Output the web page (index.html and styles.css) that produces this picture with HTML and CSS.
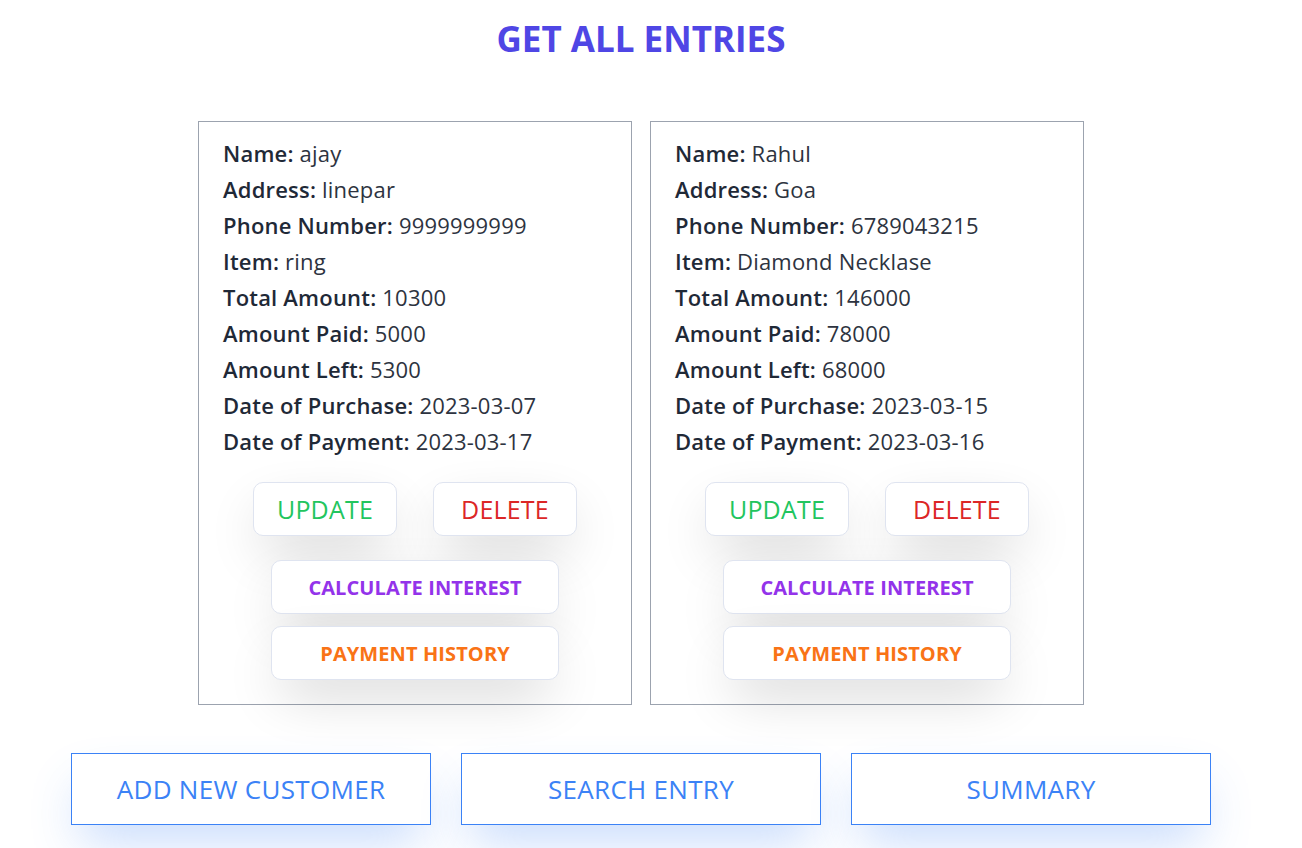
FILE: index.html
```html
<!DOCTYPE html>
<html lang="en">
<head>
<meta charset="utf-8">
<title>Get All Entries</title>
<link rel="stylesheet" href="styles.css">
</head>
<body>
<div class="page">
  <h1 class="title">GET ALL ENTRIES</h1>
  <div class="cards">
    <div class="card">
      <div class="fields">
        <p><b>Name:</b> ajay</p>
        <p><b>Address:</b> linepar</p>
        <p><b>Phone Number:</b> 9999999999</p>
        <p><b>Item:</b> ring</p>
        <p><b>Total Amount:</b> 10300</p>
        <p><b>Amount Paid:</b> 5000</p>
        <p><b>Amount Left:</b> 5300</p>
        <p><b>Date of Purchase:</b> 2023-03-07</p>
        <p><b>Date of Payment:</b> 2023-03-17</p>
      </div>
      <div class="row">
        <button class="btn btn-update">UPDATE</button>
        <button class="btn btn-delete">DELETE</button>
      </div>
      <button class="btn btn-wide btn-interest">CALCULATE INTEREST</button>
      <button class="btn btn-wide btn-history">PAYMENT HISTORY</button>
    </div>
    <div class="card">
      <div class="fields">
        <p><b>Name:</b> Rahul</p>
        <p><b>Address:</b> Goa</p>
        <p><b>Phone Number:</b> 6789043215</p>
        <p><b>Item:</b> Diamond Necklase</p>
        <p><b>Total Amount:</b> 146000</p>
        <p><b>Amount Paid:</b> 78000</p>
        <p><b>Amount Left:</b> 68000</p>
        <p><b>Date of Purchase:</b> 2023-03-15</p>
        <p><b>Date of Payment:</b> 2023-03-16</p>
      </div>
      <div class="row">
        <button class="btn btn-update">UPDATE</button>
        <button class="btn btn-delete">DELETE</button>
      </div>
      <button class="btn btn-wide btn-interest">CALCULATE INTEREST</button>
      <button class="btn btn-wide btn-history">PAYMENT HISTORY</button>
    </div>
  </div>
  <div class="actions">
    <button class="action">ADD NEW CUSTOMER</button>
    <button class="action">SEARCH ENTRY</button>
    <button class="action">SUMMARY</button>
  </div>
</div>
</body>
</html>
```

FILE: styles.css
```css
* { box-sizing: border-box; }
html { overflow: hidden; background: #ffffff; }
body { margin: 0; padding: 0; font-family: "Open Sans", "Noto Sans", sans-serif; color: #1f2937; }

.page {
  width: 1282px;
  padding-bottom: 60px;
  display: flex;
  flex-direction: column;
  align-items: center;
}

.title {
  margin: 0;
  padding-top: 17px;
  font-size: 35px;
  line-height: 44px;
  font-weight: 700;
  color: #4f46e5;
  letter-spacing: 0;
}

.cards {
  margin-top: 60px;
  display: flex;
  gap: 18px;
}

.card {
  width: 434px;
  height: 584px;
  border: 1px solid #9ca3af;
  padding: 13px 24px 24px;
  display: flex;
  flex-direction: column;
  align-items: center;
}

.fields { align-self: stretch; }
.fields p {
  margin: 0;
  font-size: 22px;
  line-height: 36px;
  color: #2d3340;
  letter-spacing: 0.2px;
}
.fields b { font-weight: 600; color: #1f2937; }

.row {
  margin-top: 23px;
  display: flex;
  gap: 36px;
}

.btn {
  font-family: inherit;
  background: #ffffff;
  border: 1px solid #dfe4f0;
  border-radius: 10px;
  height: 54px;
  padding: 0;
  box-shadow: 0 22px 55px -10px rgba(0, 0, 0, 0.2);
  cursor: pointer;
}

.btn-update, .btn-delete {
  width: 144px;
  font-size: 25px;
  font-weight: 500;
  letter-spacing: 0.2px;
}
.btn-update { color: #22c55e; }
.btn-delete { color: #dc2626; }

.btn-wide {
  width: 288px;
  font-size: 20px;
  font-weight: 700;
  letter-spacing: 0.1px;
}
.btn-interest { margin-top: 24px; color: #9333ea; }
.btn-history { margin-top: 12px; color: #f97316; }

.actions {
  margin-top: 48px;
  display: flex;
  gap: 30px;
}

.action {
  width: 360px;
  height: 72px;
  padding: 0;
  background: #ffffff;
  border: 1px solid #3b82f6;
  color: #3b82f6;
  font-family: inherit;
  font-size: 26px;
  font-weight: 500;
  letter-spacing: 0.3px;
  box-shadow: 0 25px 50px -10px rgba(59, 130, 246, 0.3);
  cursor: pointer;
}
```
